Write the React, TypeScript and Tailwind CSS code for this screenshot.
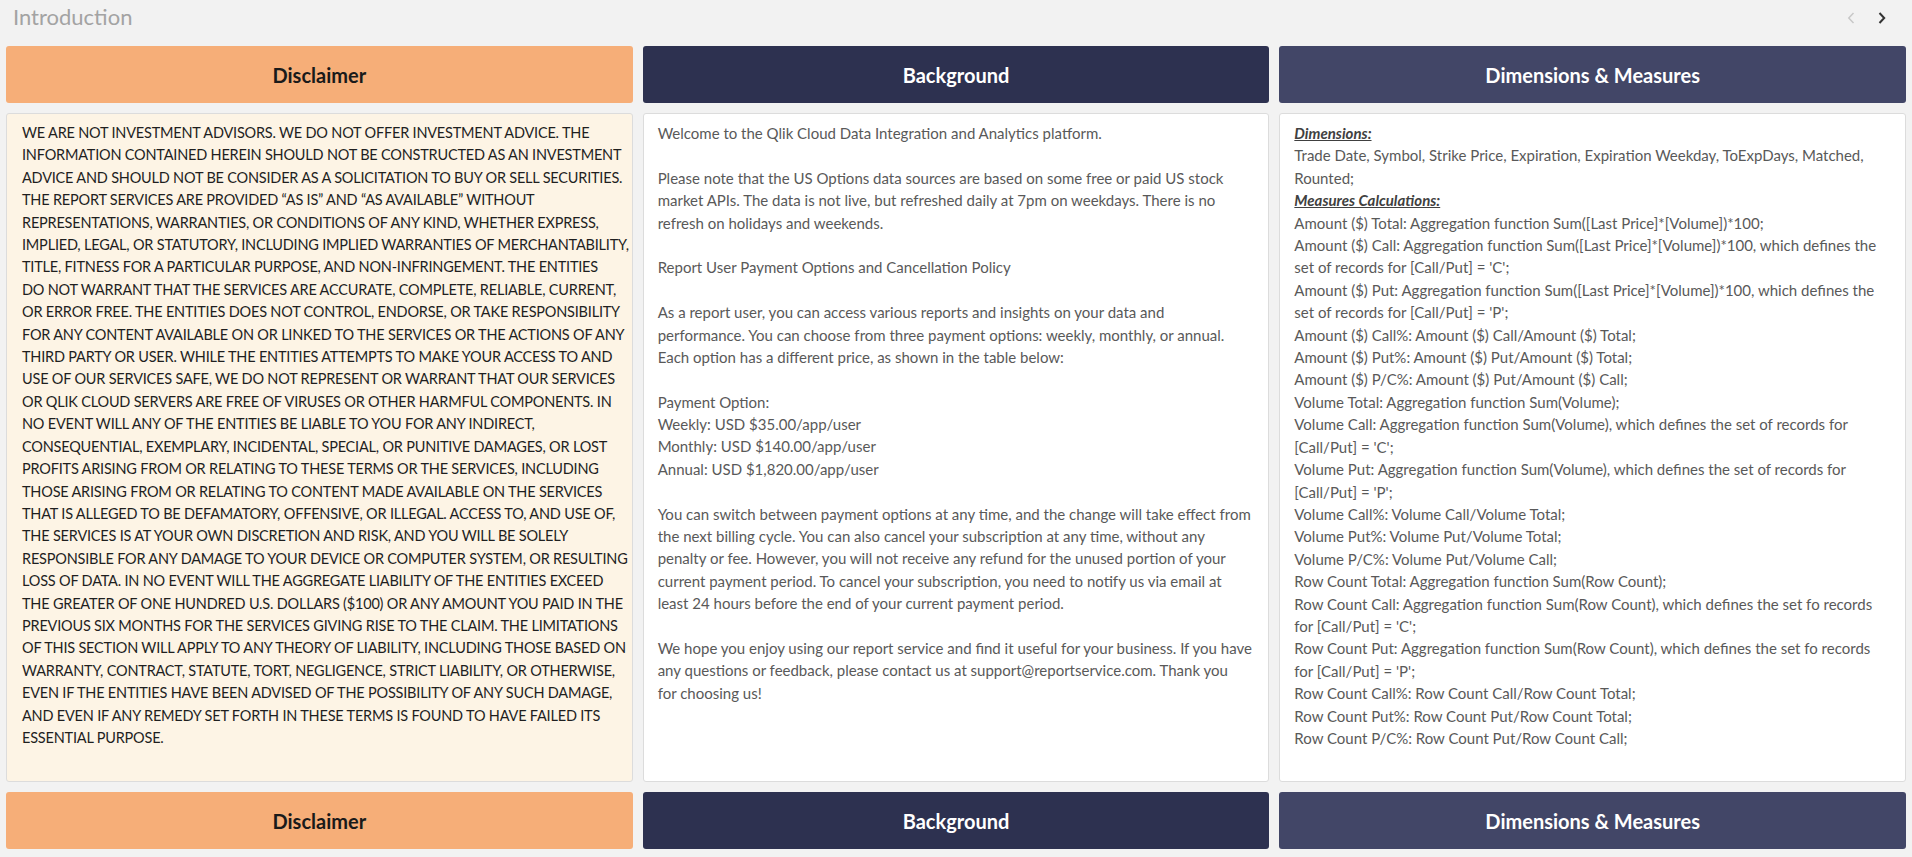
import React from "react";

const disclaimer = [
  "WE ARE NOT INVESTMENT ADVISORS. WE DO NOT OFFER INVESTMENT ADVICE. THE",
  "INFORMATION CONTAINED HEREIN SHOULD NOT BE CONSTRUCTED AS AN INVESTMENT",
  "ADVICE AND SHOULD NOT BE CONSIDER AS A SOLICITATION TO BUY OR SELL SECURITIES.",
  "THE REPORT SERVICES ARE PROVIDED \u201CAS IS\u201D AND \u201CAS AVAILABLE\u201D WITHOUT",
  "REPRESENTATIONS, WARRANTIES, OR CONDITIONS OF ANY KIND, WHETHER EXPRESS,",
  "IMPLIED, LEGAL, OR STATUTORY, INCLUDING IMPLIED WARRANTIES OF MERCHANTABILITY,",
  "TITLE, FITNESS FOR A PARTICULAR PURPOSE, AND NON-INFRINGEMENT. THE ENTITIES",
  "DO NOT WARRANT THAT THE SERVICES ARE ACCURATE, COMPLETE, RELIABLE, CURRENT,",
  "OR ERROR FREE. THE ENTITIES DOES NOT CONTROL, ENDORSE, OR TAKE RESPONSIBILITY",
  "FOR ANY CONTENT AVAILABLE ON OR LINKED TO THE SERVICES OR THE ACTIONS OF ANY",
  "THIRD PARTY OR USER. WHILE THE ENTITIES ATTEMPTS TO MAKE YOUR ACCESS TO AND",
  "USE OF OUR SERVICES SAFE, WE DO NOT REPRESENT OR WARRANT THAT OUR SERVICES",
  "OR QLIK CLOUD SERVERS ARE FREE OF VIRUSES OR OTHER HARMFUL COMPONENTS. IN",
  "NO EVENT WILL ANY OF THE ENTITIES BE LIABLE TO YOU FOR ANY INDIRECT,",
  "CONSEQUENTIAL, EXEMPLARY, INCIDENTAL, SPECIAL, OR PUNITIVE DAMAGES, OR LOST",
  "PROFITS ARISING FROM OR RELATING TO THESE TERMS OR THE SERVICES, INCLUDING",
  "THOSE ARISING FROM OR RELATING TO CONTENT MADE AVAILABLE ON THE SERVICES",
  "THAT IS ALLEGED TO BE DEFAMATORY, OFFENSIVE, OR ILLEGAL. ACCESS TO, AND USE OF,",
  "THE SERVICES IS AT YOUR OWN DISCRETION AND RISK, AND YOU WILL BE SOLELY",
  "RESPONSIBLE FOR ANY DAMAGE TO YOUR DEVICE OR COMPUTER SYSTEM, OR RESULTING",
  "LOSS OF DATA. IN NO EVENT WILL THE AGGREGATE LIABILITY OF THE ENTITIES EXCEED",
  "THE GREATER OF ONE HUNDRED U.S. DOLLARS ($100) OR ANY AMOUNT YOU PAID IN THE",
  "PREVIOUS SIX MONTHS FOR THE SERVICES GIVING RISE TO THE CLAIM. THE LIMITATIONS",
  "OF THIS SECTION WILL APPLY TO ANY THEORY OF LIABILITY, INCLUDING THOSE BASED ON",
  "WARRANTY, CONTRACT, STATUTE, TORT, NEGLIGENCE, STRICT LIABILITY, OR OTHERWISE,",
  "EVEN IF THE ENTITIES HAVE BEEN ADVISED OF THE POSSIBILITY OF ANY SUCH DAMAGE,",
  "AND EVEN IF ANY REMEDY SET FORTH IN THESE TERMS IS FOUND TO HAVE FAILED ITS",
  "ESSENTIAL PURPOSE.",
];

const background = [
  "Welcome to the Qlik Cloud Data Integration and Analytics platform.",
  "",
  "Please note that the US Options data sources are based on some free or paid US stock",
  "market APIs. The data is not live, but refreshed daily at 7pm on weekdays. There is no",
  "refresh on holidays and weekends.",
  "",
  "Report User Payment Options and Cancellation Policy",
  "",
  "As a report user, you can access various reports and insights on your data and",
  "performance. You can choose from three payment options: weekly, monthly, or annual.",
  "Each option has a different price, as shown in the table below:",
  "",
  "Payment Option:",
  "Weekly: USD $35.00/app/user",
  "Monthly: USD $140.00/app/user",
  "Annual: USD $1,820.00/app/user",
  "",
  "You can switch between payment options at any time, and the change will take effect from",
  "the next billing cycle. You can also cancel your subscription at any time, without any",
  "penalty or fee. However, you will not receive any refund for the unused portion of your",
  "current payment period. To cancel your subscription, you need to notify us via email at",
  "least 24 hours before the end of your current payment period.",
  "",
  "We hope you enjoy using our report service and find it useful for your business. If you have",
  "any questions or feedback, please contact us at support@reportservice.com. Thank you",
  "for choosing us!",
];

const dims: { t: string; h?: boolean }[] = [
  { t: "Dimensions:", h: true },
  { t: "Trade Date, Symbol, Strike Price, Expiration, Expiration Weekday, ToExpDays, Matched," },
  { t: "Rounted;" },
  { t: "Measures Calculations:", h: true },
  { t: "Amount ($) Total: Aggregation function Sum([Last Price]*[Volume])*100;" },
  { t: "Amount ($) Call: Aggregation function Sum([Last Price]*[Volume])*100, which defines the" },
  { t: "set of records for [Call/Put] = 'C';" },
  { t: "Amount ($) Put: Aggregation function Sum([Last Price]*[Volume])*100, which defines the" },
  { t: "set of records for [Call/Put] = 'P';" },
  { t: "Amount ($) Call%: Amount ($) Call/Amount ($) Total;" },
  { t: "Amount ($) Put%: Amount ($) Put/Amount ($) Total;" },
  { t: "Amount ($) P/C%: Amount ($) Put/Amount ($) Call;" },
  { t: "Volume Total: Aggregation function Sum(Volume);" },
  { t: "Volume Call: Aggregation function Sum(Volume), which defines the set of records for" },
  { t: "[Call/Put] = 'C';" },
  { t: "Volume Put: Aggregation function Sum(Volume), which defines the set of records for" },
  { t: "[Call/Put] = 'P';" },
  { t: "Volume Call%: Volume Call/Volume Total;" },
  { t: "Volume Put%: Volume Put/Volume Total;" },
  { t: "Volume P/C%: Volume Put/Volume Call;" },
  { t: "Row Count Total: Aggregation function Sum(Row Count);" },
  { t: "Row Count Call: Aggregation function Sum(Row Count), which defines the set fo records" },
  { t: "for [Call/Put] = 'C';" },
  { t: "Row Count Put: Aggregation function Sum(Row Count), which defines the set fo records" },
  { t: "for [Call/Put] = 'P';" },
  { t: "Row Count Call%: Row Count Call/Row Count Total;" },
  { t: "Row Count Put%: Row Count Put/Row Count Total;" },
  { t: "Row Count P/C%: Row Count Put/Row Count Call;" },
];

function Chevron({ dir, className }: { dir: "left" | "right"; className: string }) {
  return (
    <svg width="8" height="12" viewBox="0 0 8 12" className={className}>
      {dir === "left" ? (
        <path d="M6.5 1 L1.8 6 L6.5 11" fill="none" stroke="currentColor" strokeWidth="1.5" />
      ) : (
        <path d="M1.5 1 L6.2 6 L1.5 11" fill="none" stroke="currentColor" strokeWidth="2" />
      )}
    </svg>
  );
}

function Btn({ label, cls }: { label: string; cls: string }) {
  return (
    <div className={`h-[57px] rounded-[3px] flex items-center justify-center text-[20px] font-bold ${cls}`}>
      {label}
    </div>
  );
}

export default function App() {
  return (
    <div className="w-[1912px] h-[857px] bg-[#f2f2f2] overflow-hidden [font-family:Lato,'Open_Sans',sans-serif] flex flex-col">
      <div className="h-[46px] flex items-start justify-between pl-[13px] pr-[26px]">
        <div className="text-[22px] text-[#a3a3a3] leading-[34px]">Introduction</div>
        <div className="flex items-center gap-[23px] pt-[12px]">
          <Chevron dir="left" className="text-[#c8c8c8]" />
          <Chevron dir="right" className="text-[#333333]" />
        </div>
      </div>
      <div className="grid grid-cols-3 gap-x-[10px] px-[6px]">
        <Btn label="Disclaimer" cls="bg-[#f6ae78] text-[#1a1a1a]" />
        <Btn label="Background" cls="bg-[#2d3150] text-white" />
        <Btn label="Dimensions & Measures" cls="bg-[#424667] text-white" />
      </div>
      <div className="grid grid-cols-3 gap-x-[10px] px-[6px] mt-[10px] h-[669px]">
        <div className="bg-[#fdf4e5] border border-[#dcdcdc] rounded-[3px] pl-[15px] pt-[8px] text-[14.5px] tracking-[-0.2px] leading-[22.4px] text-[#1f1f1f] overflow-hidden">
          {disclaimer.map((l, i) => (
            <div key={i} className="whitespace-nowrap">{l}</div>
          ))}
        </div>
        <div className="bg-white border border-[#dcdcdc] rounded-[3px] pl-[14px] pt-[8px] text-[15px] leading-[22.4px] text-[#595959]">
          {background.map((l, i) => (
            <div key={i} className="whitespace-nowrap h-[22.4px]">{l}</div>
          ))}
        </div>
        <div className="bg-white border border-[#dcdcdc] rounded-[3px] pl-[14px] pt-[8px] text-[15px] leading-[22.4px] text-[#595959]">
          {dims.map((l, i) => (
            <div key={i} className={l.h ? "whitespace-nowrap font-bold italic underline text-[#404040]" : "whitespace-nowrap"}>
              {l.t}
            </div>
          ))}
        </div>
      </div>
      <div className="grid grid-cols-3 gap-x-[10px] px-[6px] mt-[10px]">
        <Btn label="Disclaimer" cls="bg-[#f6ae78] text-[#1a1a1a]" />
        <Btn label="Background" cls="bg-[#2d3150] text-white" />
        <Btn label="Dimensions & Measures" cls="bg-[#424667] text-white" />
      </div>
    </div>
  );
}
